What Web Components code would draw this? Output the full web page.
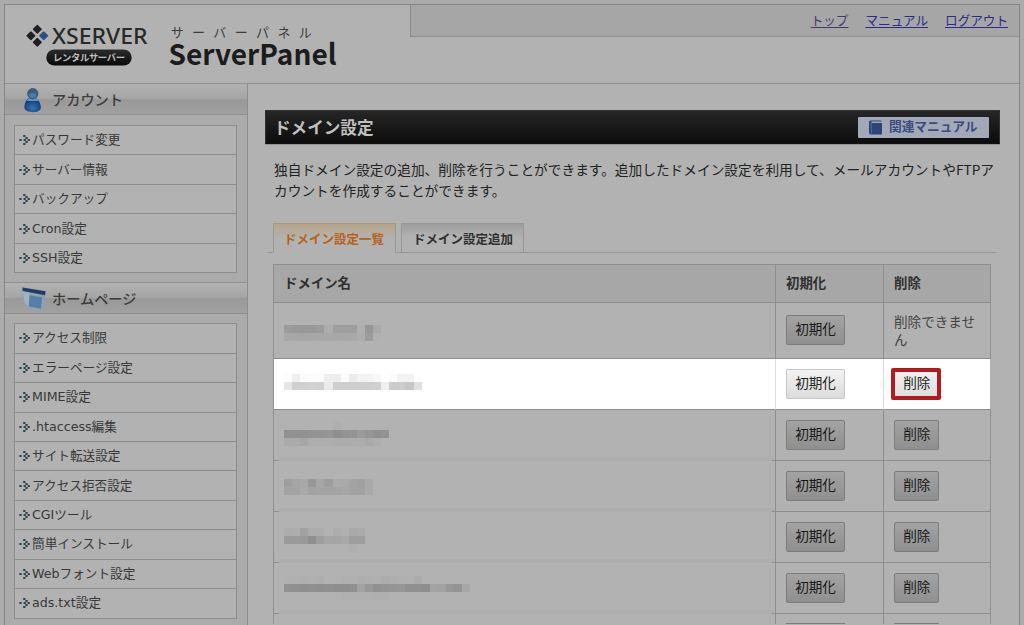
<!DOCTYPE html>
<html lang="ja">
<head>
<meta charset="utf-8">
<title>ServerPanel</title>
<style>
html,body{margin:0;height:625px;overflow:hidden;background:#ababab}
body{font-family:"Noto Sans CJK JP",sans-serif;color:#303030}
</style>
</head>
<body>
<server-panel></server-panel>
<script>
const define = (name, html, setup) => customElements.define(name, class extends HTMLElement {
  connectedCallback() {
    if (this.shadowRoot) return;
    const t = document.createElement('template');
    t.innerHTML = typeof html === 'function' ? html(this) : html;
    this.attachShadow({mode: 'open'}).append(t.content.cloneNode(true));
    if (setup) setup(this);
  }
});

define('brand-logo', `
<style>:host{display:block;width:405px;height:79px}svg{display:block}</style>
<svg width="405" height="79" viewBox="5 5 405 79">
  <defs><linearGradient id="p" x2="0" y2="1"><stop stop-color="#2c2c2c"/><stop offset="1" stop-color="#080808"/></linearGradient></defs>
  <g fill="#202124" stroke="#202124" stroke-width="1.4" stroke-linejoin="round">
    <path d="M37.300 25.400l3.800 3.800-3.800 3.800-3.800-3.800z"/><path d="M30.900 31.900l3.800 3.800-3.800 3.800-3.800-3.800z"/><path d="M37.300 38.400l3.800 3.800-3.800 3.800-3.800-3.800z"/>
    <path d="M43.700 31.900l3.800 3.800-3.800 3.800-3.800-3.800z" fill="#274f88" stroke="#274f88"/>
  </g>
  <text x="52" y="43.8" font-family="Noto Sans" font-weight="500" font-size="21.5" textLength="95.5" lengthAdjust="spacingAndGlyphs" fill="#292929">XSERVER</text>
  <rect x="46.3" y="49.4" width="85.4" height="16.2" rx="8.1" fill="url(#p)"/>
  <text x="53" y="61" font-size="9.3" font-weight="700" textLength="72" fill="#bdbdbd">レンタルサーバー</text>
  <text x="170.7" y="36.5" font-size="13" letter-spacing="8.4" fill="#3c3c3c">サーバーパネル</text>
  <text x="168.500" y="64.800" font-weight="700" font-size="28.8" textLength="168" lengthAdjust="spacingAndGlyphs" fill="#1c1c1c">ServerPanel</text>
</svg>`);

define('top-links', `
<style>
:host{display:flex;width:609px;height:32px;box-sizing:border-box;border-left:1px solid #8c8c8c;border-bottom:1px solid #8f8f8f;background:#a6a6a6;justify-content:flex-end;gap:17px;padding-right:11px}
a{font-size:12.6px;line-height:30px;color:#2c2a8c;text-decoration:underline;text-underline-offset:2px}
.seen{color:#443a66}
</style><a class="seen">トップ</a><a>マニュアル</a><a>ログアウト</a>`);

define('menu-item', `
<style>
:host{display:flex;box-sizing:border-box;height:29.45px;border-bottom:1px solid #8d8d8d;align-items:center;padding-left:4px;gap:1px;font:12.65px/18px "DejaVu Sans","Noto Sans CJK JP",sans-serif;color:#383838}
svg{flex:none}span{white-space:nowrap}
</style>
<svg width="12" height="12" viewBox="0 0 12 12" fill="#28454d"><path d="M.4 4.900h2.200v2.200H.400zM4.600 4.900h2.200v2.200H4.600zM4.200 .9h2.200v2.200H4.200zM6.400 2.900h2.200v2.200H6.400zM8.600 4.900h2.200v2.200H8.600zM6.400 6.900h2.200v2.200H6.400zM4.200 8.900h2.200v2.200H4.200z"/></svg>
<span><slot></slot></span>`);

define('menu-group', el => `
<style>
:host{display:block}
header{height:31px;box-sizing:border-box;display:flex;align-items:center;border-bottom:1px solid #8f8f8f;background:linear-gradient(#b2b2b2,#a5a5a5 48%,#999 52%,#a1a1a1);padding-left:14px;font-size:14.2px;font-weight:500;color:#3c3c3c}
header svg{flex:none}
header span{margin-left:5px;position:relative;top:-.5px}
.list{margin:var(--gap,10px) 10px 9px 9px;border:1px solid #8d8d8d;border-bottom:0;background:#b2b2b2}
</style>
<header>${el.getAttribute('icon') === 'user' ? `
<svg width="28" height="31" viewBox="0 0 28 31"><defs><radialGradient id="g" cx=".5" cy=".7" r=".6"><stop stop-color="#3274b4"/><stop offset="1" stop-color="#153b72"/></radialGradient></defs>
<path d="M5.400 23.500c0-5 2.600-9 5-9.500h6c2.500.9 5.500 5 5.500 9.500 0 3-3.500 4.700-8 4.700s-8.500-1.700-8.500-4.700z" fill="url(#g)"/><path d="M7.800 17h11.800c-1-1.800-2-3-4.200-3.300h-3.600c-2 .3-3.100 1.500-4 3.300z" fill="#6493ba"/><circle cx="13.800" cy="9.600" r="5.600" fill="#3a5c80"/><ellipse cx="13.800" cy="11.300" rx="3.600" ry="2.600" fill="#4c7ca4"/></svg>` : `
<svg width="28" height="31" viewBox="0 0 28 31"><path d="M3.400 4.500L26.600 8.500 24.700 26.700 9 23.800 4 18z" fill="#8fa2b2"/><path d="M3.400 4.500L26.600 8.300 26 12.200 3.600 8z" fill="#1e3d64"/><path d="M4 8.500l6.500 1.300-1 14-4-4z" fill="#9eb2c2"/><path d="M10.500 12.300l12.600 2-1.200 11.500-12-2.300z" fill="#567fa8"/></svg>`}
<span>${el.getAttribute('label')}</span></header>
<div class="list"><slot></slot></div>`);

define('title-bar', `
<style>
:host{display:flex;height:34px;box-sizing:border-box;width:735px;align-items:center;justify-content:space-between;background:linear-gradient(#262626,#0c0c0c);border:1px solid #303030;border-bottom-color:#111;box-shadow:0 1px #939393;padding:0 10px 0 8px}
h1{margin:0;font-size:16.6px;line-height:32px;color:#c0c0c0;font-weight:700}
div{display:flex;width:131px;height:21px;background:#a2a8b8;align-items:center;box-sizing:border-box;padding-left:11px;gap:7px;font-weight:700;font-size:12.7px;line-height:20px;color:#394d7d;border-radius:1px}
svg{flex:none}span{margin-top:-2px}
</style>
<h1><slot></slot></h1>
<div><svg width="13" height="15" viewBox="0 0 13 15"><path d="M0 2.500C0 1 1 .5 2 .5h10.500v1H2.500v1.500h10.500V14.500H2Q0 14.500 0 12.500z" fill="#2c4478"/><path d="M2.400 3v11" stroke="#6879a0" stroke-width=".7"/></svg><span>関連マニュアル</span></div>`);

define('tab-bar', `
<style>
:host{display:flex;height:30px;width:728px;gap:5px;padding-left:5px;box-sizing:border-box;background:linear-gradient(#989898,#989898) 0 100%/100% 1px no-repeat}
div{box-sizing:border-box;width:123px;border:1px solid #989898;padding-left:11px;font-size:12.5px;line-height:30px;font-weight:700;color:#303030;background:linear-gradient(#9d9d9d,#b2b2b2 45%)}
.on{color:#b86218;background:linear-gradient(#b9a586,#b2b2b2 50%);border-color:#a69882 #989898 #b2b2b2;padding-left:10px}
</style><div class="on">ドメイン設定一覧</div><div>ドメイン設定追加</div>`);

define('mosaic-text', `<style>:host{display:block}div{display:flex}i{width:8.1px;height:8.1px;flex:none}</style>`, el => {
  for (const line of el.getAttribute('cells').split('/')) {
    const d = document.createElement('div');
    for (const c of line.split(' ')) {
      const i = document.createElement('i');
      if (c !== '-') i.style.background = '#' + c.repeat(3);
      d.append(i);
    }
    el.shadowRoot.append(d);
  }
});

define('push-button', `
<style>
:host{display:block;box-sizing:border-box;position:relative;height:30px;width:59px;white-space:nowrap;padding-left:8.2px;border:1px solid #7c7c7c;border-radius:2px;background:linear-gradient(#a3a3a3,#8f8f8f);font-size:13.6px;line-height:25px;color:#181818}
:host([short]){width:45px}
:host([lit]){border-color:#c6c6c6;background:linear-gradient(#f2f2f2,#dcdcdc);color:#222}
:host([marked])::after{content:"";position:absolute;left:-4px;top:-2px;width:42px;height:24px;border:4px solid #b21a1e;border-radius:2px}
</style><slot></slot>`);

define('domain-row', el => `
<style>
:host{display:grid;grid-template-columns:502px 108px 107px;height:var(--h,51px)}
.c{box-sizing:border-box;border-right:1px solid #8e8e8e;border-bottom:1px solid #8e8e8e;padding:var(--p,10px) 10px 0;font-size:13.6px;line-height:18px;color:#444}
.name{border-bottom:0;padding:var(--m) 10px 0;background:linear-gradient(#8e8e8e,#8e8e8e) 0 100%/5px 1px no-repeat,linear-gradient(#8e8e8e,#8e8e8e) 100% 100%/3px 1px no-repeat,linear-gradient(#aeaeae,#aeaeae) 100% 100%/496px 4px no-repeat}
:host([lit]){background:linear-gradient(#fff,#fff) 0 0/716px 50px no-repeat}
:host([lit]) .c{border-right-color:#ddd}
:host([lit]) .act{border-right-color:#b2b2b2}
:host([solid]) .name{border-bottom:1px solid #8e8e8e;background:none}
.no{margin-top:-3px}
</style>
<div class="c name"><mosaic-text cells="${el.getAttribute('cells')}"></mosaic-text></div>
<div class="c"><push-button ${el.hasAttribute('lit') ? 'lit' : ''}>初期化</push-button></div>
<div class="c act">${el.hasAttribute('locked') ? '<div class="no">削除できません</div>' : `<push-button short ${el.hasAttribute('lit') ? 'lit marked' : ''}>削除</push-button>`}</div>`);

define('domain-table', `
<style>
:host{display:block;width:718px;box-sizing:border-box;border-left:1px solid #8e8e8e;border-top:1px solid #8e8e8e}
.head{display:grid;grid-template-columns:502px 108px 107px;height:38px;background:#a7a7a7}
.head div{box-sizing:border-box;border-right:1px solid #8e8e8e;border-bottom:1px solid #8e8e8e;padding-left:10px;font-size:13.4px;font-weight:700;line-height:35px;color:#303030}
.peek{display:grid;grid-template-columns:502px 108px 107px;height:10px;overflow:hidden}
.peek div{box-sizing:border-box;border-right:1px solid #8e8e8e;padding:9px 0 0 10px}
.peek i{display:block;width:59px;height:1px;background:#7c7c7c}
.peek .s{width:45px}
</style>
<div class="head"><div>ドメイン名</div><div>初期化</div><div>削除</div></div>
<domain-row solid locked style="--h:56px;--p:12px;--m:21.500px" cells="9b 99 98 98 9c ae 9e 9e 9e af 97 a9/a7 a7 a6 a7 a7 a8 a7 a7 a8 ad 9c b0"></domain-row>
<domain-row solid lit style="--m:14.500px" cells="fc f0 fb fc fc ee ee fb ec f3 f3 f8 - fb f3 f3/e6 d0 d0 d2 d0 ea ce ce ce ce ce d0 f0 cc cc c6 e0"></domain-row>
<domain-row style="--m:12px" cells="- - - - - - af/91 91 91 93 93 95 8f 92 94 9b 96 90 92/aa aa a6 ae ae ae ac ac ad ae aa ae"></domain-row>
<domain-row style="--m:18px" cells="9e a4 a8 98 a6 9d aa a8 a4 a0 a9/a4 a4 aa a2 a4 a4 a4 a6 a2 a2 aa"></domain-row>
<domain-row style="--m:16.300px" cells="ac ae a1 ac ac - ac b0 a8 aa/9a 9a 99 8f 9e a6 a5 a8 9e 9e/- - - - - - - - af"></domain-row>
<domain-row style="--m:13px" cells="b0 b0 ae b0 ae - - b0 b0 ad af b0 ac ae b0 b0 ac/91 90 8e 90 8e 90 8e 8e 90 a2 98 91 94 95 96 90 90 8e a3 a2 97 94 a7/- - - - - - - b0 b0 b0 b0 af af"></domain-row>
<div class="peek"><div></div><div><i></i></div><div><i class="s"></i></div></div>`);

define('server-panel', `
<style>
:host{display:block;box-sizing:border-box;width:1016px;height:621px;overflow:hidden;margin:4px 0 0 4px;border:1px solid #858585;border-bottom:0;background:#b2b2b2}
.top{display:flex;height:79px;box-sizing:border-box;border-bottom:1px solid #8f8f8f}
.body{display:grid;grid-template-columns:243px 1fr}
aside{box-sizing:border-box;height:541px;background:#ababab;border-right:1px solid #8d8d8d}
main{padding:26px 0 0 17px}
p{margin:15px 0 0 9px;width:724px;font-size:13.7px;line-height:21px;color:#222}
tab-bar{margin:22px 0 0 3px}
domain-table{margin:11px 0 0 8px}
.second{border-top:1px solid #8f8f8f}
</style>
<div class="top"><brand-logo></brand-logo><top-links></top-links></div>
<div class="body">
<aside>
<menu-group icon="user" label="アカウント">
${['パスワード変更','サーバー情報','バックアップ','Cron設定','SSH設定'].map(t => `<menu-item>${t}</menu-item>`).join('')}
</menu-group>
<menu-group class="second" style="--gap:9px" icon="page" label="ホームページ">
${['アクセス制限','エラーページ設定','MIME設定','.htaccess編集','サイト転送設定','アクセス拒否設定','CGIツール','簡単インストール','Webフォント設定','ads.txt設定'].map(t => `<menu-item>${t}</menu-item>`).join('')}
</menu-group>
</aside>
<main>
<title-bar>ドメイン設定</title-bar>
<p>独自ドメイン設定の追加、削除を行うことができます。追加したドメイン設定を利用して、メールアカウントやFTPアカウントを作成することができます。</p>
<tab-bar></tab-bar>
<domain-table></domain-table>
</main>
</div>`);
</script>
</body>
</html>
